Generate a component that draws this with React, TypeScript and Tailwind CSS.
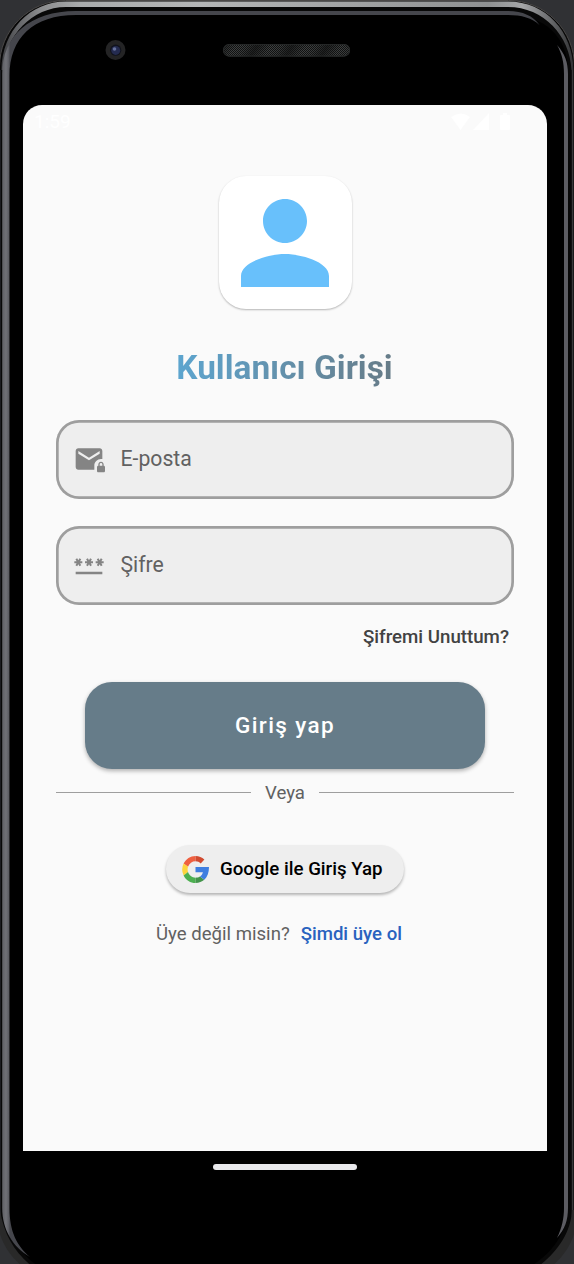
import React from "react";

function DeviceFrame() {
  return (
    <svg className="absolute inset-0 h-[1264px] w-[574px]" viewBox="0 0 574 1264" fill="none" aria-hidden="true">
      <defs>
        <linearGradient id="rim" x1="0" y1="0" x2="574" y2="0" gradientUnits="userSpaceOnUse">
          <stop offset="0" stopColor="#3a3b3e" />
          <stop offset="0.03" stopColor="#626366" />
          <stop offset="0.07" stopColor="#8a8b8d" />
          <stop offset="0.14" stopColor="#a9abac" />
          <stop offset="0.35" stopColor="#b4b6b7" />
          <stop offset="0.85" stopColor="#8f9192" />
          <stop offset="0.91" stopColor="#a5a6a8" />
          <stop offset="0.96" stopColor="#68696b" />
          <stop offset="1" stopColor="#303133" />
        </linearGradient>
        <linearGradient id="side" x1="2" y1="0" x2="10" y2="0" gradientUnits="userSpaceOnUse">
          <stop offset="0" stopColor="#5e5f64" />
          <stop offset="0.5" stopColor="#707177" />
          <stop offset="0.8" stopColor="#5f6066" />
          <stop offset="1" stopColor="#45464c" />
        </linearGradient>
        <pattern id="mesh" width="2" height="2" patternUnits="userSpaceOnUse">
          <path d="M0 0h1v1H0zM1 1h1v1H1z" fill="#111" />
        </pattern>
        <linearGradient id="grille" x1="223" y1="44" x2="248" y2="60" gradientUnits="userSpaceOnUse" spreadMethod="repeat">
          <stop offset="0" stopColor="#1e2020" />
          <stop offset="0.4" stopColor="#3e4141" />
          <stop offset="0.7" stopColor="#383b3b" />
          <stop offset="1" stopColor="#1e2020" />
        </linearGradient>
      </defs>
      <rect width="574" height="1264" fill="#303134" />
      <rect x="-0.5" y="0.5" width="575" height="1281" rx="66" fill="#080808" stroke="#4a4847" />
      <path d="M1.5 70C2 31 30 1.6 66 1.6H508C546 1.6 573 32 573.5 70H571.5C570 36 544 7 508 7H66C32 7 5 36 3 70Z" fill="url(#rim)" />
      <path d="M572.6 70V1216" stroke="#38393a" strokeWidth="1.6" />
      <path d="M572 1210C571 1234 555 1255 536 1268H550C562 1258 570 1247 574 1234V1210Z" fill="#292929" />
      <path d="M0.5 70V1216" stroke="#1b1c20" />
      <path d="M0 1210C4 1236 16 1254 34 1268H24C12 1258 4 1247 0 1234Z" fill="#292929" />
      <path d="M9.5 64C9.5 30 30 15 68 15H508C544 15 568 36 568 72V1208C566 1238 548 1256 528 1268H42C22 1258 9.5 1236 9.5 1212Z" fill="#000" />
      <path d="M2.2 74C2.2 36 30 11 76 11H508C523 11 533 16 539.5 25C532 18 522 15 508 15H76C33 15 9.5 38 9.5 76V1208C9.5 1232 17 1246 30 1257C13 1247 2.2 1230 2.2 1208Z" fill="url(#side)" />
      <path d="M557 45C565 54 568 62 568 74V1208C568 1220 565 1229 557 1238C562 1228 564 1218 564 1208V74C564 62 562 54 557 45Z" fill="#5c5c62" />
      <circle cx="115.5" cy="50" r="10" fill="#242425" />
      <circle cx="115.7" cy="50.2" r="5.6" fill="#11131c" />
      <circle cx="115.7" cy="50.4" r="4.5" fill="#242b50" />
      <circle cx="114.5" cy="49" r="1.8" fill="#65719c" />
      <rect x="223" y="44" width="127" height="12.5" rx="6.2" fill="url(#grille)" />
      <rect x="223.5" y="44.5" width="126" height="11.5" rx="5.7" fill="url(#mesh)" stroke="#242626" />
    </svg>
  );
}

function StatusBar() {
  return (
    <div className="flex h-8 items-center justify-between pl-[11px] pr-[37px] text-white">
      <span className="pt-px text-[19px] leading-8">1:59</span>
      <svg className="h-[17px] w-[59px]" viewBox="0 0 59 17" fill="currentColor" aria-hidden="true">
        <path d="M0 4Q10-3 19 4L9.5 17ZM22 17 38 0V17Z" />
        <path d="M50 2h2V0h4v2h2q1 0 1 1v13q0 1-1 1h-8q-1 0-1-1V3q0-1 1-1Z" />
      </svg>
    </div>
  );
}

function MailLockIcon() {
  return (
    <svg className="h-8 w-8" viewBox="0 0 24 24" fill="#848484" aria-hidden="true">
      <path d="M16 17c0-2.76 2.24-5 5-5 .34 0 .67.03 1 .08V6c0-1.1-.9-2-2-2H4c-1.1 0-2 .9-2 2v12c0 1.1.9 2 2 2h12v-3zm-4-4L4 8V6l8 5 8-5v2l-8 5zM23 17v-1c0-1.1-.9-2-2-2s-2 .9-2 2v1c-.55 0-1 .45-1 1v3c0 .55.45 1 1 1h4c.55 0 1-.45 1-1v-3c0-.55-.45-1-1-1zm-1 0h-2v-1c0-.55.45-1 1-1s1 .45 1 1v1z" />
    </svg>
  );
}

function PasswordIcon() {
  return (
    <svg className="h-8 w-8" viewBox="0 0 24 24" fill="#848484" aria-hidden="true">
      <path d="M2 17h20v2H2v-2zm1.15-4.05L4 11.47l.85 1.48 1.3-.75-.85-1.48H7v-1.5H5.3l.85-1.47L4.85 7 4 8.47 3.15 7l-1.3.75.85 1.47H1v1.5h1.7l-.85 1.48 1.3.75zm6.7-.75 1.3.75.85-1.48.85 1.48 1.3-.75-.85-1.48H15v-1.5h-1.7l.85-1.47-1.3-.75L12 8.47 11.15 7l-1.3.75.85 1.47H9v1.5h1.7l-.85 1.48zM23 9.22h-1.7l.85-1.47-1.3-.75L20 8.47 19.15 7l-1.3.75.85 1.47H17v1.5h1.7l-.85 1.48 1.3.75.85-1.48.85 1.48 1.3-.75-.85-1.48H23v-1.5z" />
    </svg>
  );
}

function GoogleIcon() {
  return (
    <svg className="h-[27px] w-[27px]" viewBox="0 0 27 27" aria-hidden="true">
      <path d="M13.5 0C8.3 0 4 3 1.6 7.6L6 10.8C7.3 7.3 10.2 5.3 13.5 5.3Z" fill="#ef6040" />
      <path d="M13.5 0v5.3c2.2 0 3.8.8 5.2 2.1L22.4 3.6C20 1.4 17 0 13.5 0Z" fill="#d14b30" />
      <path d="M1.6 7.6a13.5 13.5 0 0 0 0 11.8L6 16.1a9 9 0 0 1 0-5.3Z" fill="#fdd43d" />
      <path d="M1.6 19.4C4 24 8.4 27 13.5 27v-5.3c-3.5 0-6.3-2.2-7.5-5.6Z" fill="#4caf50" />
      <path d="M13.5 21.7V27c3.5 0 6.6-1.2 8.8-3.2L18 20.5c-1.2.8-2.6 1.2-4.5 1.2Z" fill="#43944b" />
      <path d="M13.5 11v5.3h7.4c-.4 1.8-1.4 3.2-2.9 4.2l4.3 3.3c3-2.8 4.7-7 4.7-12.8Z" fill="#3f7ee0" />
    </svg>
  );
}

function Field({ icon, label }: { icon: React.ReactNode; label: string }) {
  return (
    <div className="flex h-[79px] w-[458px] items-center gap-4 rounded-[23px] bg-[#eeeeee] pb-px pl-[16.5px] text-[21.2px] text-[#616161] shadow-[inset_0_0_0_2.7px_#9e9e9e]">
      {icon}
      <span className="leading-7">{label}</span>
    </div>
  );
}

export default function App() {
  return (
    <div className="relative h-[1264px] w-[574px] overflow-hidden font-['Roboto',sans-serif]">
      <DeviceFrame />
      <div className="relative flex h-full flex-col pl-[23px] pt-[105px]">
        <main className="flex h-[1046px] w-[524px] flex-col rounded-t-[19px] bg-[#fafafa]">
          <StatusBar />
          <div className="flex flex-col items-center">
            <div className="mt-[39px] flex h-[133px] w-[133px] items-center justify-center rounded-[27px] bg-white shadow-[0_1px_2px_rgba(0,0,0,0.28)]">
              <svg className="mr-px h-[134px] w-[134px]" viewBox="0 0 24 24" fill="#68c0fb" aria-hidden="true">
                <path d="M12 12c2.21 0 4-1.79 4-4s-1.79-4-4-4-4 1.79-4 4 1.79 4 4 4zm0 2c-2.67 0-8 1.34-8 4v2h16v-2c0-2.66-5.33-4-8-4z" />
              </svg>
            </div>
            <h1 className="mt-[39px] bg-gradient-to-r from-[#5ca5cf] to-[#667b87] bg-clip-text pr-px text-[33.4px] font-bold leading-10 text-transparent">Kullanıcı Girişi</h1>
            <div className="mt-8 flex flex-col gap-[26.5px]">
              <Field icon={<MailLockIcon />} label="E-posta" />
              <Field icon={<PasswordIcon />} label="Şifre" />
            </div>
            <div className="mt-5 flex w-[458px] justify-end pr-[5px]">
              <a className="text-[18.7px] font-medium leading-6 text-[#424242]">Şifremi Unuttum?</a>
            </div>
            <button className="mt-[33px] h-[87px] w-[400px] rounded-[27px] bg-[#667c89] pt-[2px] text-[22.5px] font-medium tracking-[1.4px] text-white shadow-[0_2px_4px_rgba(0,0,0,0.3)]">Giriş yap</button>
            <div className="mt-3 flex h-6 w-[458px] items-center">
              <div className="h-[1.4px] flex-1 bg-[#9e9e9e]" />
              <span className="px-3.5 text-[18.6px] leading-6 text-[#616161]">Veya</span>
              <div className="h-[1.4px] flex-1 bg-[#9e9e9e]" />
            </div>
            <button className="mt-10 flex h-12 w-[238px] items-center gap-[11px] rounded-full bg-[#eeeeee] pl-4 pt-px text-[18.7px] font-medium text-black shadow-[0_2px_3px_rgba(0,0,0,0.28)]">
              <GoogleIcon />
              <span className="whitespace-nowrap pt-px">Google ile Giriş Yap</span>
            </button>
            <p className="mt-[29px] flex gap-[11px] pr-3 text-[18.6px] leading-6 text-[#616161]">
              <span>Üye değil misin?</span>
              <a className="font-medium text-[#2962bf]">Şimdi üye ol</a>
            </p>
          </div>
        </main>
        <div className="flex w-[524px] justify-center pt-[13px]">
          <div className="h-[6px] w-[144px] rounded-full bg-[#e9e9eb]" />
        </div>
      </div>
    </div>
  );
}
